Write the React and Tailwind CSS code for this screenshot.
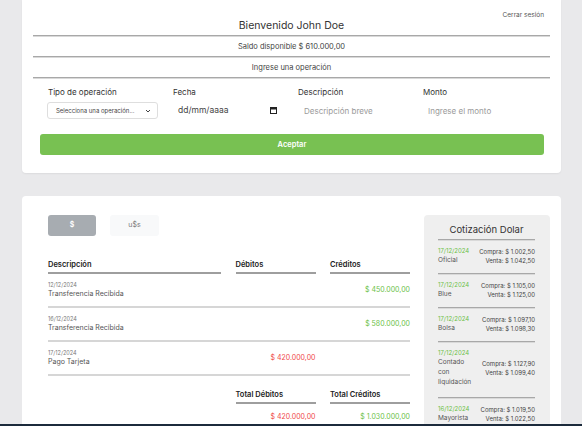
import React from "react";

const Line = ({ className = "" }) => (
  <div className={"border-t border-t-[#a8a8a8] border-b border-b-[#d9d9d9] " + className} />
);

const SoftLine = ({ className = "" }) => (
  <div className={"h-[2px] bg-[#d6d6d6] " + className} />
);

const rows = [
  { date: "12/12/2024", desc: "Transferencia Recibida", deb: "", cred: "$ 450.000,00" },
  { date: "16/12/2024", desc: "Transferencia Recibida", deb: "", cred: "$ 580.000,00" },
  { date: "17/12/2024", desc: "Pago Tarjeta", deb: "$ 420.000,00", cred: "" },
];

const quotes = [
  { date: "17/12/2024", name: ["Oficial"], c: "$ 1.002,50", v: "$ 1.042,50" },
  { date: "17/12/2024", name: ["Blue"], c: "$ 1.105,00", v: "$ 1.125,00" },
  { date: "17/12/2024", name: ["Bolsa"], c: "$ 1.097,10", v: "$ 1.098,30" },
  { date: "17/12/2024", name: ["Contado", "con", "liquidación"], c: "$ 1.127,90", v: "$ 1.099,40", multi: true },
  { date: "16/12/2024", name: ["Mayorista"], c: "$ 1.019,50", v: "$ 1.022,50" },
];

export default function App() {
  return (
    <div
      className="relative w-[582px] h-[426px] overflow-hidden bg-[#e9e9eb] px-[22px] text-[#333]"
      style={{ fontFamily: "Inter, 'Open Sans', sans-serif" }}
    >
      {/* Card 1 */}
      <div className="w-[539px] bg-white rounded-b-[4px] px-[11px] pt-[11px] pb-[18px] shadow-[0_1px_2px_rgba(0,0,0,0.06)]">
        <div className="flex justify-end pr-[6px] text-[6.5px] leading-[8px] text-[#555]">Cerrar sesión</div>
        <div className="mt-[-1px] text-center text-[10.5px] leading-[16px] text-[#333]">Bienvenido John Doe</div>
        <Line className="mt-[1px]" />
        <div className="h-[19px] flex items-center justify-center text-[7.5px] text-[#444]">Saldo disponible $ 610.000,00</div>
        <Line />
        <div className="h-[19px] flex items-center justify-center text-[7.5px] text-[#444]">Ingrese una operación</div>
        <Line />
        <div className="grid grid-cols-[125px_125px_125px_125px] pl-[14px] mt-[8px]">
          <div>
            <div className="pl-[1px] text-[8px] leading-[10px] text-[#333]">Tipo de operación</div>
            <div className="mt-[5px] w-[111px] h-[17px] border border-[#dedede] rounded-[3px] flex items-center justify-between pl-[8px] pr-[6px]">
              <span className="text-[6px] text-[#444]">Selecciona una operación...</span>
              <svg width="6" height="4" viewBox="0 0 6 4"><path d="M1 1l2 2 2-2" fill="none" stroke="#444" strokeWidth="1" /></svg>
            </div>
          </div>
          <div>
            <div className="pl-[1px] text-[8px] leading-[10px] text-[#333]">Fecha</div>
            <div className="mt-[5px] h-[17px] flex items-center justify-between pl-[6px] pr-[20px]">
              <span className="text-[8.5px] text-[#444]">dd/mm/aaaa</span>
              <svg width="7" height="7" viewBox="0 0 7 7">
                <rect x="0.5" y="0.5" width="6" height="6" fill="none" stroke="#222" strokeWidth="1" />
                <rect x="0.5" y="0.5" width="6" height="2" fill="#222" />
              </svg>
            </div>
          </div>
          <div>
            <div className="pl-[1px] text-[8px] leading-[10px] text-[#333]">Descripción</div>
            <div className="mt-[5px] h-[17px] flex items-center pl-[7px] text-[8px] text-[#9a9a9a]">Descripción breve</div>
          </div>
          <div>
            <div className="pl-[1px] text-[8px] leading-[10px] text-[#333]">Monto</div>
            <div className="mt-[5px] h-[17px] flex items-center pl-[6px] text-[8px] text-[#9a9a9a]">Ingrese el monto</div>
          </div>
        </div>
        <div className="mt-[15px] ml-[7px] mr-[6px] h-[21px] rounded-[3px] bg-[#78c152] flex items-center justify-center text-[7.5px] font-semibold text-white">
          Aceptar
        </div>
      </div>

      {/* Card 2 */}
      <div className="mt-[23px] w-[539px] h-[260px] bg-white rounded-t-[4px] pl-[26px] pr-[11px] pt-[19px] flex gap-[14px]">
        <div className="w-[362px]">
          <div className="flex gap-[14px]">
            <div className="w-[48px] h-[21px] rounded-[3px] bg-[#a7acb1] flex items-center justify-center text-[7px] font-semibold text-white">$</div>
            <div className="w-[49px] h-[21px] rounded-[3px] bg-[#f8f9fa] flex items-center justify-center text-[7px] text-[#777]">u$s</div>
          </div>
          {/* header */}
          <div className="mt-[22px] grid grid-cols-[173px_80px_80px] gap-x-[14.5px]">
            {["Descripción", "Débitos", "Créditos"].map((h) => (
              <div key={h}>
                <div className="h-[14px] flex items-center text-[7.5px] font-semibold text-[#222]">{h}</div>
                <div className="h-[2px] bg-[#9e9e9e]" />
              </div>
            ))}
          </div>
          {rows.map((r, i) => (
            <div key={i}>
              <div className="h-[32px] grid grid-cols-[173px_80px_80px] gap-x-[14.5px] items-center">
                <div className="flex flex-col">
                  <span className="text-[5.5px] leading-[8px] text-[#777]">{r.date}</span>
                  <span className="text-[7px] leading-[10px] text-[#555]">{r.desc}</span>
                </div>
                <div className="text-right text-[7px] text-[#f04848]">{r.deb}</div>
                <div className="text-right text-[7px] text-[#6cbf47]">{r.cred}</div>
              </div>
              <SoftLine />
            </div>
          ))}
          <div className="mt-[12px] grid grid-cols-[173px_80px_80px] gap-x-[14.5px]">
            <div />
            <div>
              <div className="h-[14px] flex items-center text-[7.5px] font-semibold text-[#222]">Total Débitos</div>
              <div className="h-[2px] bg-[#9e9e9e]" />
              <div className="mt-[8px] text-right text-[7px] leading-[10px] text-[#f04848]">$ 420.000,00</div>
            </div>
            <div>
              <div className="h-[14px] flex items-center text-[7.5px] font-semibold text-[#222]">Total Créditos</div>
              <div className="h-[2px] bg-[#9e9e9e]" />
              <div className="mt-[8px] text-right text-[7px] leading-[10px] text-[#6cbf47]">$ 1.030.000,00</div>
            </div>
          </div>
        </div>

        {/* Cotización */}
        <div className="w-[126px] h-[240px] rounded-[4px] bg-[#efefef] pl-[14px] pr-[15px] pt-[8px]">
          <div className="h-[14px] flex items-center justify-center text-[9.5px] text-[#333]">Cotización Dolar</div>
          <Line className="mt-[2px]" />
          {quotes.map((q, i) => (
            <div key={i}>
              <div className={"flex justify-between pt-[6px] " + (q.multi ? "items-center pb-[10px]" : "pb-[8px]")}>
                <div className="flex flex-col">
                  <span className="text-[6px] leading-[8px] text-[#6cbf47]">{q.date}</span>
                  {q.name.map((n) => (
                    <span key={n} className="text-[6.5px] leading-[10px] text-[#555]">{n}</span>
                  ))}
                </div>
                <div className="flex flex-col items-end text-[6px] text-[#444]">
                  <span className="leading-[9px]">Compra: {q.c}</span>
                  <span className="leading-[9px]">Venta: {q.v}</span>
                </div>
              </div>
              {i < quotes.length - 1 && <Line />}
            </div>
          ))}
        </div>
      </div>
      <div className="absolute left-0 right-0 bottom-0 h-[2px] bg-[#1c2b3c]" />
    </div>
  );
}
